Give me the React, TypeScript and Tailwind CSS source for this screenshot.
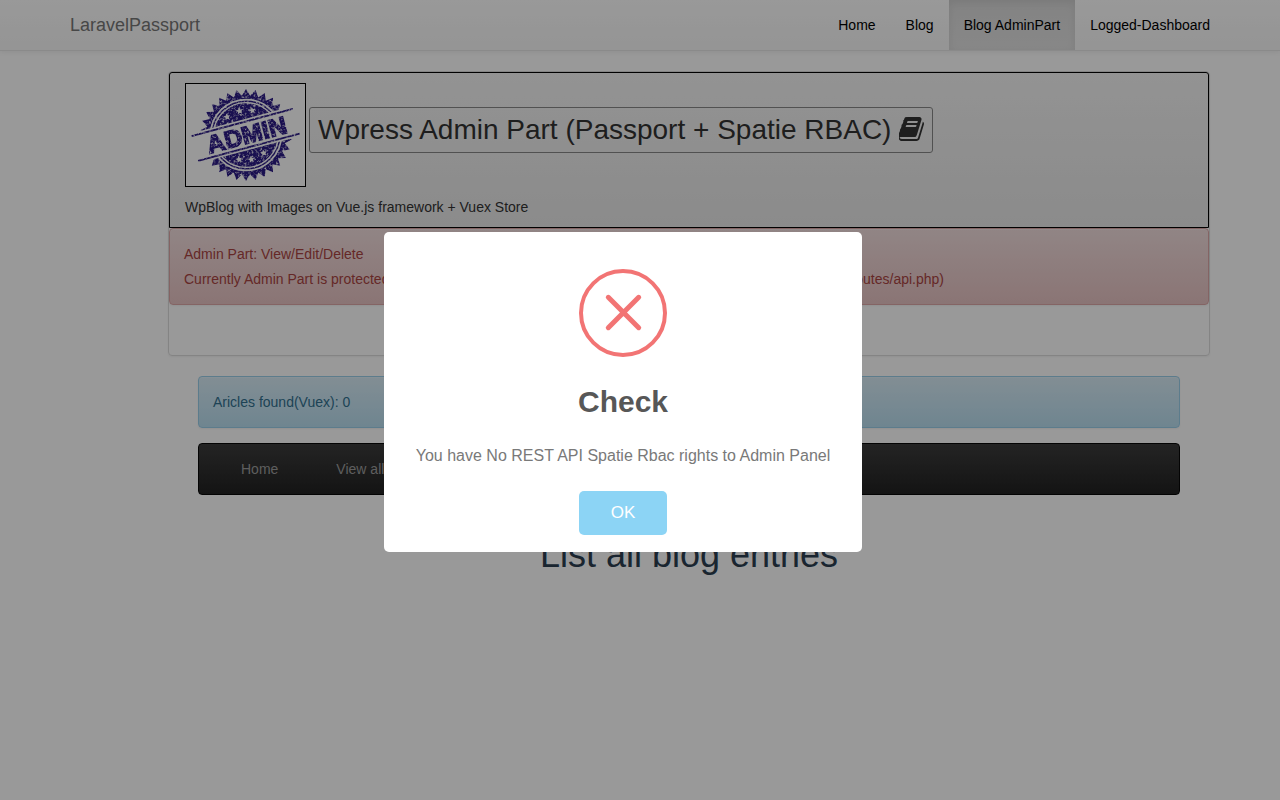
import React from "react";

const INK = "#2b1a85";

function burst(cx: number, cy: number, outer: number, inner: number, n: number, turn = 0) {
  const pts: string[] = [];
  for (let i = 0; i < n * 2; i++) {
    const r = i % 2 === 0 ? outer : inner;
    const a = (Math.PI * i) / n - Math.PI / 2 + turn;
    pts.push(`${(cx + r * Math.cos(a)).toFixed(2)},${(cy + r * Math.sin(a)).toFixed(2)}`);
  }
  return pts.join(" ");
}

const STARS = [
  [42, 34],
  [54.5, 28],
  [67.3, 27.5],
  [54, 76.5],
  [66.3, 76.5],
  [78.7, 70],
];

function AdminStamp() {
  return (
    <svg width="119" height="102" viewBox="1 1 119 102" className="block">
      <defs>
        <filter id="worn" x="0" y="0" width="100%" height="100%">
          <feTurbulence type="fractalNoise" baseFrequency="0.45" numOctaves="2" seed="4" result="n" />
          <feColorMatrix in="n" type="matrix" values="0 0 0 0 0  0 0 0 0 0  0 0 0 0 0  -2.6 0 0 0 2.25" result="m" />
          <feComposite in="SourceGraphic" in2="m" operator="in" />
        </filter>
      </defs>
      <rect x="0" y="0" width="121" height="104" fill="#fff" />
      <g filter="url(#worn)">
        <polygon points={burst(61, 52, 46, 39.5, 30)} fill={INK} />
        <circle cx="61" cy="52" r="35.4" fill="none" stroke="#fff" strokeWidth="1.7" />
        <circle cx="61" cy="52" r="32.4" fill="none" stroke="#fff" strokeWidth="1.4" />
        {STARS.map(([x, y]) => (
          <polygon key={`${x}-${y}`} points={burst(x, y, 3.6, 1.7, 5, -0.2)} fill="#fff" />
        ))}
        <g transform="rotate(-15 61 51.7)">
          <rect x="10" y="36.2" width="102" height="31" fill="#fff" />
          <rect x="8" y="38" width="105" height="1.8" fill={INK} />
          <rect x="8" y="63.6" width="105" height="1.8" fill={INK} />
          <text
            x="61.5"
            y="60.6"
            textAnchor="middle"
            textLength="82"
            lengthAdjust="spacingAndGlyphs"
            fontFamily="Liberation Sans, sans-serif"
            fontWeight="700"
            fontSize="24.5"
            fill={INK}
            stroke={INK}
            strokeWidth="1.5"
          >
            ADMIN
          </text>
        </g>
      </g>
    </svg>
  );
}

function BookIcon() {
  return (
    <svg width="28" height="28" viewBox="64 0 1792 1792" fill="currentColor" className="mb-[2px] ml-2 block shrink-0">
      <path d="M1639 478q40 57 18 129l-275 906q-19 64-76.5 107.5t-122.5 43.5h-923q-77 0-148.5-53.5t-99.5-131.5q-24-67-2-127 0-4 3-27t4-37q1-8-3-21.5t-3-19.5q2-11 8-21t16.5-23.5 16.5-23.5q23-38 45-91.5t30-91.5q3-10 .5-30t-.5-28q3-11 17-28t17-23q21-36 42-92t25-90q1-9-2.5-32t.5-28q4-13 22-30.5t22-22.5q19-26 42.5-84.5t27.5-96.5q1-8-3-25.5t-2-26.5q2-8 9-18t18-23 17-21q8-12 16.5-30.5t15-35 16-36 19.5-32 26.5-23.5 36-11.5 47.5 5.5l-1 3q38-9 51-9h761q74 0 114 56t18 130l-274 906q-36 119-71.5 153.5t-128.5 34.5h-869q-27 0-38 15-11 16-1 43 24 70 144 70h923q29 0 56-15.5t35-41.5l300-987q7-22 5-57 38 15 59 43zm-1064 2q-4 13 2 22.5t20 9.5h608q13 0 25.5-9.5t16.5-22.5l21-64q4-13-2-22.5t-20-9.5h-608q-13 0-25.5 9.5t-16.5 22.5zm-83 256q-4 13 2 22.5t20 9.5h608q13 0 25.5-9.5t16.5-22.5l21-64q4-13-2-22.5t-20-9.5h-608q-13 0-25.5 9.5t-16.5 22.5z" />
    </svg>
  );
}

function Navbar() {
  return (
    <nav className="flex h-[51px] items-start justify-between border-b border-[#e7e7e7] bg-gradient-to-b from-white to-[#f8f8f8] px-[70px] shadow-[0_1px_5px_rgba(0,0,0,0.075)]">
      <a className="text-[18px] leading-[50px] text-[#777]">LaravelPassport</a>
      <div className="-mr-[15px] flex h-[50px] leading-[50px] text-black">
        <a className="px-[15px]">Home</a>
        <a className="px-[15px]">Blog</a>
        <a className="bg-gradient-to-b from-[#dbdbdb] to-[#e2e2e2] px-[15px] shadow-[inset_0_3px_9px_rgba(0,0,0,0.075)]">
          Blog AdminPart
        </a>
        <a className="px-[15px]">Logged-Dashboard</a>
      </div>
    </nav>
  );
}

function AlertModal() {
  return (
    <div className="fixed inset-0 bg-black/40">
      <div className="absolute left-[384px] top-[232px] flex h-[320px] w-[478px] flex-col items-center rounded-[5px] bg-white">
        <svg width="88" height="88" viewBox="0 0 88 88" className="mt-[37px] shrink-0" fill="none" stroke="#f27474">
          <circle cx="44" cy="44" r="42" strokeWidth="4" />
          <path d="M29.3 28.3 59.7 58.7M59.7 28.3 29.3 58.7" strokeWidth="5" strokeLinecap="round" />
        </svg>
        <h2 className="mt-[25px] text-[30px] font-bold leading-[40px] text-[#575757]">Check</h2>
        <p className="mt-[24px] whitespace-nowrap text-[16px] leading-[20px] text-[#797979]">
          You have No REST API Spatie Rbac rights to Admin Panel
        </p>
        <button className="mt-[25px] h-[44px] w-[88px] rounded-[5px] bg-[#8cd4f5] text-[17px] font-normal text-white">
          OK
        </button>
      </div>
    </div>
  );
}

export default function App() {
  return (
    <div className="h-[800px] overflow-hidden bg-white font-['Liberation_Sans',Arial,sans-serif] text-[14px] leading-[20px] text-[#2c3e50]">
      <Navbar />
      <main className="ml-[168px] mt-[20px] w-[1042px]">
        <section className="h-[285px] rounded border border-[#ddd] shadow-[0_1px_2px_rgba(0,0,0,0.05)]">
          <header className="h-[156px] rounded-t-[3px] border border-black bg-gradient-to-b from-[#f5f5f5] to-[#e8e8e8] px-[15px] pt-[10px] text-[#333]">
            <div className="flex items-start">
              <div className="border border-black">
                <AdminStamp />
              </div>
              <h1 className="ml-[3px] mt-[24px] flex h-[46px] w-[624px] items-center whitespace-nowrap rounded-[3px] border border-[#888] pl-[8px] text-[28px] leading-[44px]">
                Wpress Admin Part (Passport + Spatie RBAC)
                <BookIcon />
              </h1>
            </div>
            <p className="mt-[10px]">WpBlog with Images on Vue.js framework + Vuex Store</p>
          </header>
          <div className="h-[77px] rounded border border-[#dca7a7] bg-gradient-to-b from-[#f2dede] to-[#e7c3c3] px-[14px] pt-[15px] text-[#a94442] shadow-[inset_0_1px_0_rgba(255,255,255,0.25),0_1px_2px_rgba(0,0,0,0.05)]">
            <p>Admin Part: View/Edit/Delete</p>
            <p className="mt-[5px] flex w-[760px] justify-between">
              <span>Currently Admin Part is protected</span>
              <span>(see routes/api.php)</span>
            </p>
          </div>
        </section>
        <div className="mx-[30px] mt-[20px] rounded border border-[#9acfea] bg-gradient-to-b from-[#d9edf7] to-[#b9def0] px-[14px] py-[15px] text-[#31708f] shadow-[inset_0_1px_0_rgba(255,255,255,0.25),0_1px_2px_rgba(0,0,0,0.05)]">
          Aricles found(Vuex): 0
        </div>
        <div className="mx-[30px] mt-[15px] flex h-[52px] items-center gap-[58px] rounded border border-[#080808] bg-gradient-to-b from-[#3c3c3c] to-[#222] pl-[42px] text-[#9d9d9d]">
          <a>Home</a>
          <a>View all</a>
        </div>
        <h2 className="mt-[40px] text-center text-[36px] leading-[40px]">List all blog entries</h2>
      </main>
      <AlertModal />
    </div>
  );
}
